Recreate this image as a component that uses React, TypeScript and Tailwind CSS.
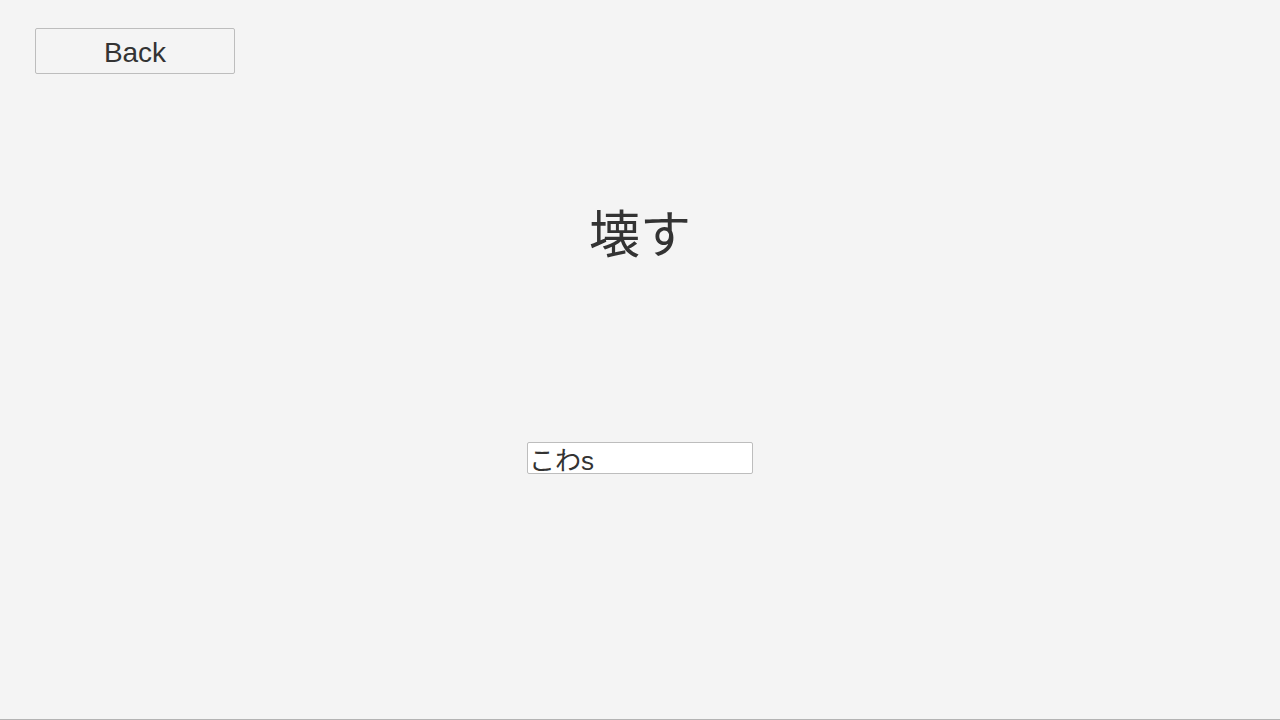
export default function App() {
  return (
    <div
      className="flex h-[720px] w-full flex-col bg-[#f4f4f4] border-b border-[#b3b3b3] text-[#333333]"
      style={{ fontFamily: '"Liberation Sans", "Noto Sans CJK JP", sans-serif' }}
    >
      <div className="pl-[35px] pt-[28px]">
        <button className="h-[46px] w-[200px] rounded-[2px] border border-[#bdbdbd] bg-[#f4f4f4] pt-[3px] text-[28px] leading-none text-[#333333]">
          Back
        </button>
      </div>
      <h1
        className="mt-[121px] text-center text-[51px] font-normal leading-[72px]"
        style={{ fontFamily: '"Noto Sans CJK JP", sans-serif' }}
      >
        壊す
      </h1>
      <div className="mt-[175px] flex justify-center">
        <input
          defaultValue="こわs"
          className="h-[32px] w-[226px] rounded-[2px] border border-[#bdbdbd] bg-white px-[1px] text-[26px] leading-none text-[#333333] outline-none"
          style={{ fontFamily: '"Liberation Sans", "Noto Sans CJK JP", sans-serif' }}
        />
      </div>
    </div>
  );
}
